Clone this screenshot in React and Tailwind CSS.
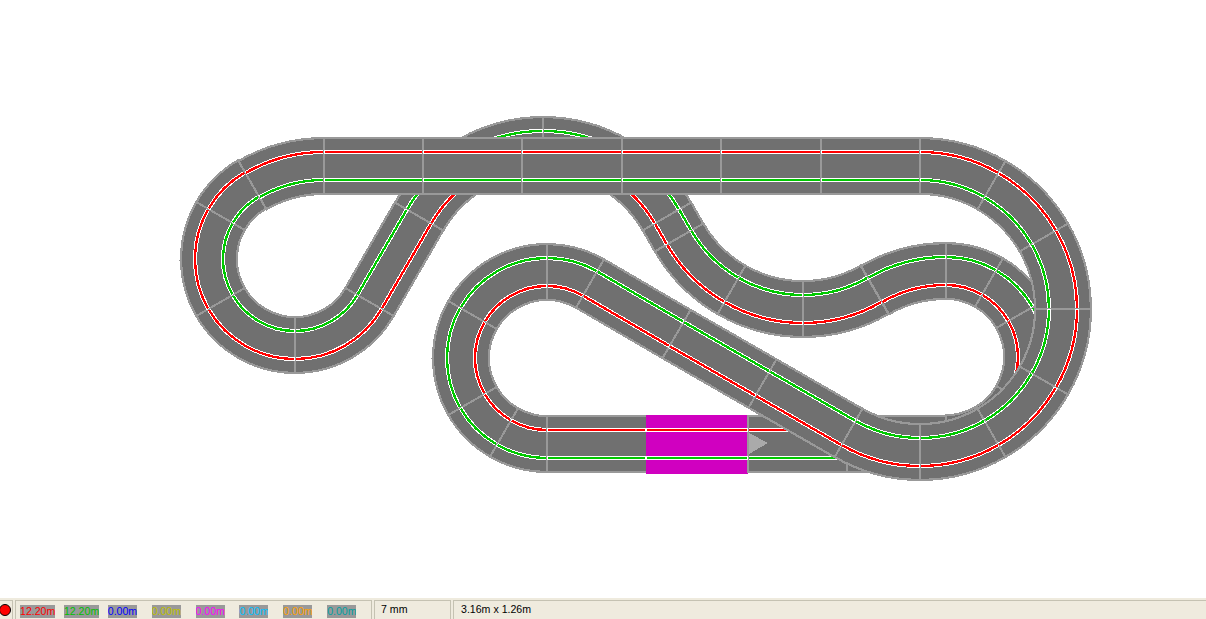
import React from "react";

const LANE = 14;
const WIDTH = 58;
const pt = (c, r, t) => {
  const a = (t * Math.PI) / 180;
  return [c[0] + r * Math.sin(a), c[1] - r * Math.cos(a)];
};
const f = (n) => n.toFixed(2);

function linePath(a, b, off, trim) {
  const dx = b[0] - a[0];
  const dy = b[1] - a[1];
  const l = Math.hypot(dx, dy);
  const ux = dx / l;
  const uy = dy / l;
  const nx = uy * off;
  const ny = -ux * off;
  return `M${f(a[0] + nx + ux * trim)} ${f(a[1] + ny + uy * trim)}L${f(b[0] + nx - ux * trim)} ${f(b[1] + ny - uy * trim)}`;
}
function arcPath(c, r, t0, t1, off, trim) {
  const cw = t1 > t0;
  const rr = cw ? r + off : r - off;
  const dt = ((trim / rr) * 180) / Math.PI * (cw ? 1 : -1);
  const a = pt(c, rr, t0 + dt);
  const b = pt(c, rr, t1 - dt);
  return `M${f(a[0])} ${f(a[1])}A${rr} ${rr} 0 0 ${cw ? 1 : 0} ${f(b[0])} ${f(b[1])}`;
}
function spokeOf(p, atStart) {
  if (p.type === "l") {
    const dx = p.b[0] - p.a[0];
    const dy = p.b[1] - p.a[1];
    const l = Math.hypot(dx, dy);
    const nx = (dy / l) * (WIDTH / 2);
    const ny = (-dx / l) * (WIDTH / 2);
    const q = atStart ? p.a : p.b;
    return `M${f(q[0] + nx)} ${f(q[1] + ny)}L${f(q[0] - nx)} ${f(q[1] - ny)}`;
  }
  const t = atStart ? p.t0 : p.t1;
  const a = pt(p.c, p.r - WIDTH / 2, t);
  const b = pt(p.c, p.r + WIDTH / 2, t);
  return `M${f(a[0])} ${f(a[1])}L${f(b[0])} ${f(b[1])}`;
}
const geom = (p, off, trim) =>
  p.type === "l" ? linePath(p.a, p.b, off, trim) : arcPath(p.c, p.r, p.t0, p.t1, off, trim);

const line = (a, b, extra) => ({ type: "l", a, b, ...extra });
const arcs = (c, r, ts) =>
  ts.slice(1).map((t, i) => ({ type: "a", c, r, t0: ts[i], t1: t }));

const pieces = [
  line([748, 444], [847, 444]),
  line([847, 444], [946, 444]),
  ...arcs([946, 357], 86, [180, 150, 120, 60, 30, 0]),
  ...arcs([946, 413], 142, [0, -30]),
  ...arcs([803, 166], 143, [150, 180, 210, 240]),
  line([679, 237.5], [667, 216.5]),
  ...arcs([543, 288], 143, [60, 30, 0, -30, -60]),
  line([419, 216.5], [369.5, 302]),
  ...arcs([295, 259], 86, [120, 180, 240, 300, 330]),
  ...arcs([324, 309], 143, [-30, 0]),
  line([324, 166], [423, 166]),
  line([423, 166], [522, 166]),
  line([522, 166], [622, 166]),
  line([622, 166], [721, 166]),
  line([721, 166], [821, 166]),
  line([821, 166], [920, 166]),
  ...arcs([920, 309], 143, [0, 30, 60, 90, 120, 150, 180, 210]),
  line([848.5, 433], [762.5, 383.5]),
  line([762.5, 383.5], [676.5, 334]),
  line([676.5, 334], [590, 283.5]),
  ...arcs([547, 358], 86, [30, 0, -60, -120, -150, -180]),
  line([547, 444], [646, 444], { noEnd: true }),
  line([646, 444], [748, 444], { start: true }),
];

function Piece({ p }) {
  const c = geom(p, 0, 0);
  const ext = geom(p, 0, -0.4);
  return (
    <g>
      {p.start ? (
        <path d={c} stroke="#d000c0" strokeWidth={WIDTH + 1} fill="none" />
      ) : (
        <>
          <path d={c} stroke="#999999" strokeWidth={WIDTH} fill="none" />
          <path d={ext} stroke="#707070" strokeWidth={WIDTH - 4.4} fill="none" />
        </>
      )}
      {!p.start && <path d={spokeOf(p, true)} stroke="#999999" strokeWidth="2" fill="none" />}
      {!p.noEnd && <path d={spokeOf(p, false)} stroke="#999999" strokeWidth="2" fill="none" />}
      {[
        [LANE, "#ff0000"],
        [-LANE, "#00c800"],
      ].map(([off, col]) => (
        <g key={col}>
          <path d={geom(p, off, 0)} stroke="#ffffff" strokeWidth="4.2" fill="none" />
          <path d={geom(p, off, 0.6)} stroke={col} strokeWidth="2.3" fill="none" />
        </g>
      ))}
    </g>
  );
}

const labels = [
  ["12.20m", "#ff0000", 35],
  ["12.20m", "#00c000", 35],
  ["0.00m", "#0000ff", 29],
  ["0.00m", "#c0c000", 29],
  ["0.00m", "#ff00ff", 29],
  ["0.00m", "#00c0ff", 29],
  ["0.00m", "#ffa000", 29],
  ["0.00m", "#00a0a0", 29],
];

export default function App() {
  return (
    <div className="flex h-[619px] w-[1206px] flex-col overflow-hidden bg-white">
      <div className="h-[598px] w-full">
        <svg width="1206" height="598" viewBox="0 0 1206 598" shapeRendering="crispEdges" className="block">
          {pieces.map((p, i) => (
            <Piece key={i} p={p} />
          ))}
          <polygon points="749,433 768,443 749,454" fill="#aaaaaa" />
          <path d="M179 260H181M431 358H433" stroke="#999999" strokeWidth="1" />
        </svg>
      </div>
      <div className="flex h-[21px] items-stretch gap-[2px] bg-[#efebde] pt-[2px] font-['Liberation_Sans',sans-serif] text-[10.6px] text-black">
        <div className="flex w-[13px] items-center border-t border-r border-[#c5c2b2]">
          <span className="ml-[-1px] h-[12px] w-[12px] rounded-full border border-black bg-[#ff0000]" />
        </div>
        <div className="flex w-[357px] items-center border-t border-x border-[#c5c2b2] pl-[4px] pt-[2px]">
          {labels.map(([t, col, w], i) => (
            <span key={i} className="block w-[44px]">
              <span
                style={{ color: col, width: w }}
                className="flex h-[13px] items-center overflow-hidden whitespace-nowrap bg-[#999999] leading-none"
              >
                {t}
              </span>
            </span>
          ))}
        </div>
        <div className="flex w-[77px] items-center border-t border-x border-[#c5c2b2] pl-[6px]">7 mm</div>
        <div className="flex flex-1 items-center border-t border-l border-[#c5c2b2] pl-[7px]">3.16m x 1.26m</div>
      </div>
    </div>
  );
}
